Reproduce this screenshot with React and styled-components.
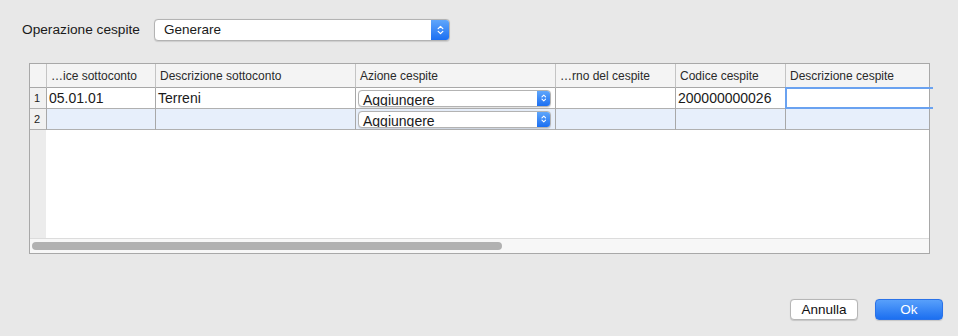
import React from 'react'
import styled, {createGlobalStyle} from 'styled-components'

const GlobalStyle = createGlobalStyle`
  html, body {
    margin: 0;
    padding: 0;
    background: #e8e8e8;
  }
  body {
    font-family: "Liberation Sans", Arial, sans-serif;
    color: #1a1a1a;
  }
`

const Page = styled.div`
  width: 958px;
  height: 336px;
  box-sizing: border-box;
  padding: 19px 15px 0 0;
  display: flex;
  flex-direction: column;
`

const TopRow = styled.div`
  display: flex;
  align-items: center;
  padding-left: 22px;
  height: 21px;
`

const Label = styled.span`
  font-size: 13.7px;
  width: 132px;
`

const Popup = styled.div`
  position: relative;
  box-sizing: border-box;
  width: ${p => p.$width}px;
  height: ${p => p.$height}px;
  background: #fff;
  border: 1px solid #b3b3b3;
  border-radius: 4px;
  display: flex;
  align-items: center;
  overflow: hidden;
  box-shadow: 0 0.5px 1px rgba(0, 0, 0, 0.12);
`

const PopupText = styled.span`
  flex: 1;
  font-size: ${p => p.$size}px;
  padding-left: ${p => p.$pad}px;
  line-height: 1;
  white-space: nowrap;
  ${p => p.$low && 'transform: translateY(2px);'}
`

const Stepper = styled.div`
  width: ${p => p.$width}px;
  align-self: stretch;
  background: linear-gradient(#5fa6fb, #1b6ff2);
  display: flex;
  align-items: center;
  justify-content: center;
`

const Chevrons = ({size = 9}) => (
  <svg width={size * 0.7} height={size} viewBox="0 0 7 10" fill="none" stroke="#fff" strokeWidth="1.3" strokeLinecap="round" strokeLinejoin="round">
    <path d="M1.2 3.6 L3.5 1.4 L5.8 3.6" />
    <path d="M1.2 6.4 L3.5 8.6 L5.8 6.4" />
  </svg>
)

const TableBox = styled.div`
  margin: 23px 0 0 29px;
  width: 901px;
  height: 191px;
  box-sizing: border-box;
  border: 1px solid #a8a8a8;
  background: #fff;
  display: flex;
  flex-direction: column;
  overflow: visible;
`

const cols = '17px 109px 200px 200px 120px 110px 1fr'

const Row = styled.div`
  display: grid;
  grid-template-columns: ${cols};
  height: ${p => p.$height}px;
  background: ${p => p.$bg || '#fff'};
`

const HeadCell = styled.div`
  box-sizing: border-box;
  border-right: 1px solid #c4c4c4;
  border-bottom: 1px solid #a8a8a8;
  background: #f4f4f4;
  font-size: 12px;
  color: #2a2a2a;
  padding-left: 4px;
  display: flex;
  align-items: center;
  white-space: nowrap;
  overflow: hidden;
  &:last-child { border-right: none; }
`

const Cell = styled.div`
  box-sizing: border-box;
  border-right: 1px solid #a8a8a8;
  border-bottom: 1px solid #b0b0b0;
  font-size: 14px;
  padding-left: 2px;
  display: flex;
  align-items: center;
  white-space: nowrap;
  &:last-child { border-right: none; }
`

const NumCell = styled(Cell)`
  background: #f1f1f1;
  font-size: 11px;
  padding-left: 4px;
  color: #222;
`

const FocusCell = styled(Cell)`
  position: relative;
  padding: 0;
  align-items: stretch;
  &::after {
    content: '';
    position: absolute;
    left: -1px;
    right: -4px;
    top: -1px;
    bottom: -1px;
    border: 2px solid #6aa2f0;
    border-right: none;
  }
`

const PopupCell = styled(Cell)`
  padding: 0 4px 0 2px;
`

const Filler = styled.div`
  flex: 1;
  display: grid;
  grid-template-columns: 16px 1fr;
  border-bottom: 1px solid #dcdcdc;
`

const Gutter = styled.div`
  background: #ececec;
`

const ScrollTrack = styled.div`
  height: 14px;
  background: #f7f7f7;
  display: flex;
  align-items: center;
  padding-left: 2px;
`

const ScrollThumb = styled.div`
  height: 8px;
  border-radius: 4px;
  background: #b1b1b1;
`

const Footer = styled.div`
  margin-top: 45px;
  display: flex;
  justify-content: flex-end;
  gap: 17px;
`

const Button = styled.button`
  box-sizing: border-box;
  width: 68px;
  height: 21px;
  border-radius: 4px;
  font-family: "Liberation Sans", Arial, sans-serif;
  font-size: 13.5px;
  padding: 0;
  border: 1px solid ${p => (p.$primary ? '#2a72e8' : '#b6b6b6')};
  color: ${p => (p.$primary ? '#fff' : '#111')};
  background: ${p => (p.$primary ? 'linear-gradient(#58a0fb, #1c6ff0)' : '#fff')};
  box-shadow: 0 0.5px 1px rgba(0, 0, 0, 0.15);
`

const headers = ['…ice sottoconto', 'Descrizione sottoconto', 'Azione cespite', '…rno del cespite', 'Codice cespite', 'Descrizione cespite']

const CellPopup = () => (
  <Popup $width={193} $height={17}>
    <PopupText $size={14} $pad={4} $low>Aggiungere</PopupText>
    <Stepper $width={13}><Chevrons size={8} /></Stepper>
  </Popup>
)

export default function App() {
  return (
    <>
      <GlobalStyle />
      <Page>
        <TopRow>
          <Label>Operazione cespite</Label>
          <Popup $width={296} $height={22}>
            <PopupText $size={13.5} $pad={9}>Generare</PopupText>
            <Stepper $width={18}><Chevrons size={10} /></Stepper>
          </Popup>
        </TopRow>

        <TableBox>
          <Row $height={24}>
            <HeadCell />
            {headers.map(h => (
              <HeadCell key={h}>{h}</HeadCell>
            ))}
          </Row>
          <Row $height={21}>
            <NumCell>1</NumCell>
            <Cell>05.01.01</Cell>
            <Cell>Terreni</Cell>
            <PopupCell><CellPopup /></PopupCell>
            <Cell />
            <Cell>200000000026</Cell>
            <FocusCell />
          </Row>
          <Row $height={21} $bg="#e7effb">
            <NumCell>2</NumCell>
            <Cell />
            <Cell />
            <PopupCell><CellPopup /></PopupCell>
            <Cell />
            <Cell />
            <Cell />
          </Row>
          <Filler>
            <Gutter />
            <div />
          </Filler>
          <ScrollTrack>
            <ScrollThumb style={{width: '470px'}} />
          </ScrollTrack>
        </TableBox>

        <Footer>
          <Button>Annulla</Button>
          <Button $primary>Ok</Button>
        </Footer>
      </Page>
    </>
  )
}
